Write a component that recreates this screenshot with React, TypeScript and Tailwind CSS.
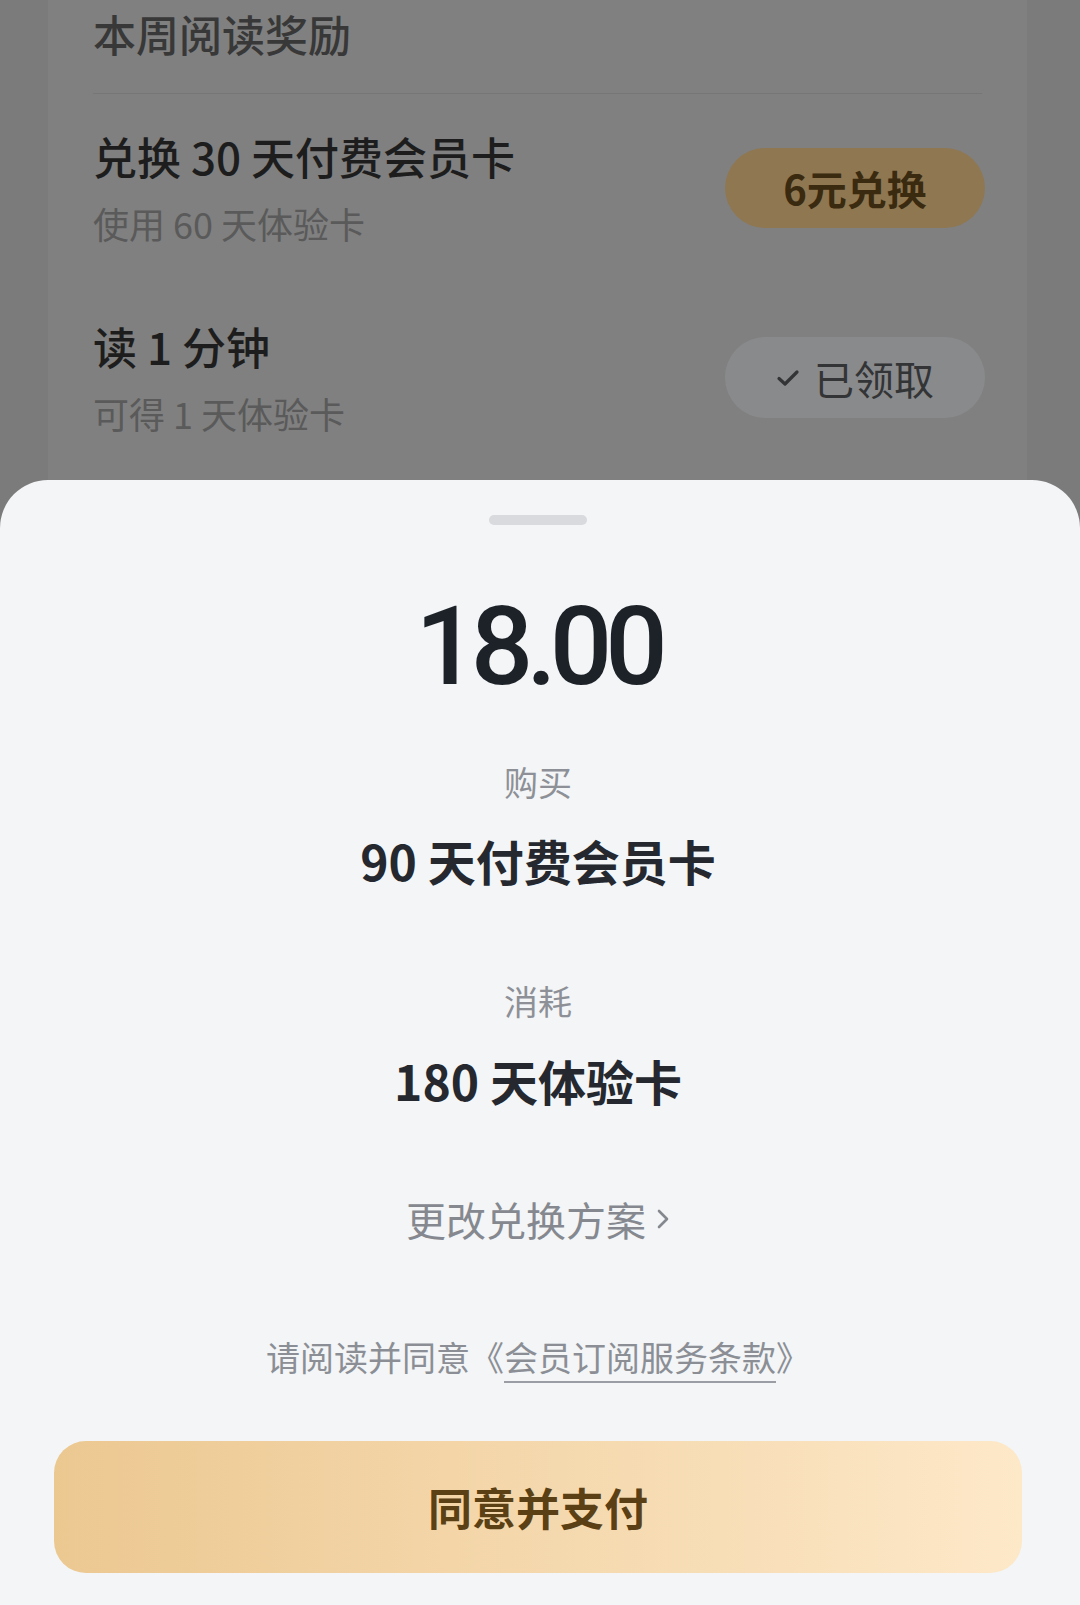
import * as React from "react";

const cjk = "font-['Noto_Sans_CJK_SC',sans-serif]";

type RewardRow = {
  title: string;
  sub: string;
  action: string;
  done: boolean;
};

const rows: RewardRow[] = [
  { title: "兑换 30 天付费会员卡", sub: "使用 60 天体验卡", action: "6元兑换", done: false },
  { title: "读 1 分钟", sub: "可得 1 天体验卡", action: "已领取", done: true },
];

function CheckIcon() {
  return (
    <svg width="24" height="20" viewBox="0 0 24 20" fill="none">
      <path d="M3 10.5 L9 16 L21 4" stroke="#333436" strokeWidth="3.2" strokeLinecap="round" strokeLinejoin="round" />
    </svg>
  );
}

function ChevronRight() {
  return (
    <svg width="14" height="22" viewBox="0 0 14 22" fill="none">
      <path d="M3 3 L11 11 L3 19" stroke="#85898f" strokeWidth="2.6" strokeLinecap="round" strokeLinejoin="round" />
    </svg>
  );
}

export default function App() {
  return (
    <div className={`${cjk} w-[1080px] h-[1605px] overflow-hidden bg-[#7b7b7b] flex flex-col`}>
      {/* 뒤쪽 페이지 (어둡게 덮인 상태) */}
      <div className="h-[480px] shrink-0 overflow-hidden pl-[48px] pr-[53px]">
        <div className="h-full bg-[#808080] px-[45px] pt-[5px]">
          <h2 className="text-[43px] leading-[56px] font-medium text-[#383838]">本周阅读奖励</h2>
          <div className="mt-[32px] h-px bg-[#767676]" />

          <div className="mt-[34px] flex flex-col gap-[71px]">
            {rows.map((r) => (
              <div key={r.title} className="flex items-center justify-between">
                <div className="flex flex-col">
                  <span className="text-[44px] leading-[56px] font-medium text-[#1d1d1d]">{r.title}</span>
                  <span className="mt-[15px] text-[36px] leading-[48px] text-[#5a5a5a]">{r.sub}</span>
                </div>
                {r.done ? (
                  <div className="mr-[-3px] flex h-[81px] w-[260px] items-center justify-center gap-[14px] rounded-full bg-[#898a8c]">
                    <CheckIcon />
                    <span className="text-[40px] leading-none text-[#333436]">{r.action}</span>
                  </div>
                ) : (
                  <div className="mr-[-3px] flex h-[80px] w-[260px] items-center justify-center rounded-full bg-[#8e7751]">
                    <span className="text-[40px] leading-none font-bold text-[#3a2a10]">{r.action}</span>
                  </div>
                )}
              </div>
            ))}
          </div>
        </div>
      </div>

      {/* 결제 바텀시트 */}
      <div className="flex-1 rounded-t-[48px] bg-[#f3f5f7] pr-[4px] flex flex-col items-center">
        <div className="mt-[35px] h-[10px] w-[98px] rounded-full bg-[#d8dadd]" />

        <div className="mt-[67px] h-[108px] text-[110px] leading-none font-medium tracking-[-7px] text-[#1d2229] font-['Roboto',sans-serif]">
          18.00
        </div>

        <div className="mt-[62px] text-[34px] leading-[40px] text-[#8d9096]">购买</div>
        <div className="mt-[30px] text-[48px] leading-[56px] font-bold text-[#25292f]">90 天付费会员卡</div>

        <div className="mt-[93px] text-[34px] leading-[40px] text-[#8d9096]">消耗</div>
        <div className="mt-[31px] text-[48px] leading-[56px] font-bold text-[#25292f]">180 天体验卡</div>

        <button className="mt-[87px] flex items-center gap-[10px] text-[40px] leading-[48px] text-[#85898f]">
          更改兑换方案
          <ChevronRight />
        </button>

        <p className="mt-[92px] text-[34px] leading-[44px] text-[#8b8f95]">
          请阅读并同意《
          <span className="underline decoration-[#9a9ea4] decoration-2 underline-offset-[10px]">会员订阅服务条款</span>》
        </p>

        <div className="mt-[62px] w-full pl-[54px] pr-[54px]">
          <button className="flex h-[132px] w-full items-center justify-center rounded-[32px] bg-gradient-to-r from-[#ecc891] to-[#fde8c8]">
            <span className="text-[44px] leading-none font-bold text-[#5a4014]">同意并支付</span>
          </button>
        </div>
      </div>
    </div>
  );
}
